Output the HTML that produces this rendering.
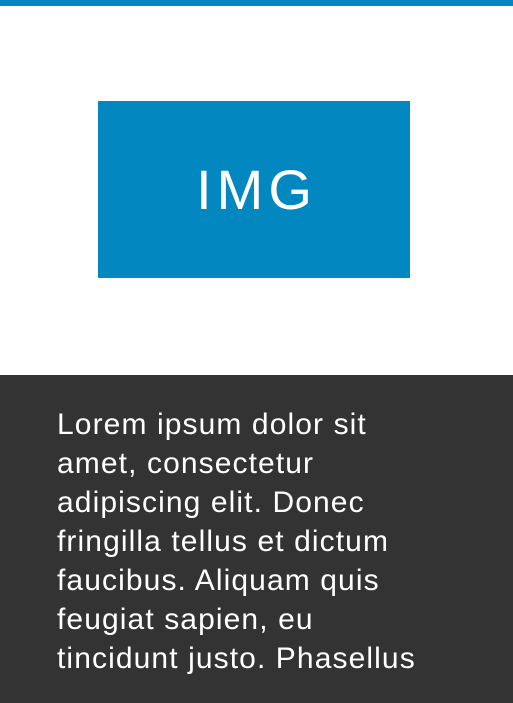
<!DOCTYPE html>
<html><head><style>
html,body{margin:0;padding:0;width:513px;height:703px;overflow:hidden;background:#fff;font-family:"Liberation Sans",sans-serif}
.bar{position:absolute;left:0;top:0;width:513px;height:6px;background:#0385bf}
.img{position:absolute;left:98px;top:101px;width:312px;height:177px;background:#0387c0;color:#fff;font-size:56px;text-align:center;line-height:177px;letter-spacing:5px;text-indent:5px}
.dark{position:absolute;left:0;top:375px;width:513px;height:328px;background:#333}
.txt{position:absolute;left:57px;top:405px;color:#fff;font-size:30px;line-height:39px;letter-spacing:1.1px;white-space:nowrap}
</style></head><body>
<div class="bar"></div>
<div class="img">IMG</div>
<div class="dark"></div>
<div class="txt">Lorem ipsum dolor sit<br>amet, consectetur<br>adipiscing elit. Donec<br>fringilla tellus et dictum<br>faucibus. Aliquam quis<br>feugiat sapien, eu<br>tincidunt justo. Phasellus</div>
</body></html>
